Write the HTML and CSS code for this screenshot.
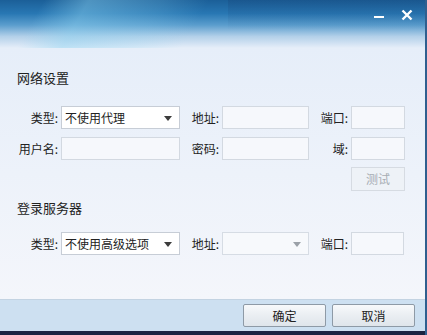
FILE: index.html
```html
<!DOCTYPE html>
<html>

<head>
  <title>网络设置</title>
  <link rel="stylesheet" href="styles.css">
</head>

<body>
  <div class="window">
    <div class="titlebar">
      <div class="streak"></div>
      <div class="shade"></div>
      <div class="controls">
        <span class="min"></span>
        <svg class="close" width="12" height="12" viewBox="0 0 12 12">
          <path d="M1.5 1.5 L10.5 10.5 M10.5 1.5 L1.5 10.5" stroke="#fff" stroke-width="2.4" />
        </svg>
      </div>
    </div>

    <div class="main">
      <div class="section-title">网络设置</div>
      <div class="grid proxy">
        <label>类型:</label>
        <div class="select">不使用代理<span class="arrow"></span></div>
        <label>地址:</label>
        <div class="field"></div>
        <label>端口:</label>
        <div class="field"></div>

        <label>用户名:</label>
        <div class="field"></div>
        <label>密码:</label>
        <div class="field"></div>
        <label>域:</label>
        <div class="field"></div>

        <div class="test">测试</div>
      </div>

      <div class="section-title second">登录服务器</div>
      <div class="grid server">
        <label>类型:</label>
        <div class="select">不使用高级选项<span class="arrow"></span></div>
        <label>地址:</label>
        <div class="select disabled"><span class="arrow"></span></div>
        <label>端口:</label>
        <div class="field short"></div>
      </div>
    </div>

    <div class="footer">
      <button class="btn">确定</button>
      <button class="btn">取消</button>
    </div>
    <div class="taskbar"></div>
  </div>
</body>

</html>
```

FILE: styles.css
```css
body {
  margin: 0;
  font-family: "Noto Sans CJK SC", "Noto Sans", sans-serif;
  font-size: 12px;
  color: #222;
  background: #1b2442;
}

.window {
  width: 427px;
  height: 335px;
  display: flex;
  flex-direction: column;
  overflow: hidden;
  position: relative;
  box-sizing: border-box;
  border-right: 2px solid #2f5f8f;
}

.titlebar {
  height: 48px;
  flex: none;
  position: relative;
  overflow: hidden;
  background: linear-gradient(180deg, #1b5f98 0%, #2877b3 28%, #5a9dcd 52%, #b3d0e9 76%, #e6eef9 100%);
}

.streak {
  position: absolute;
  left: -40px;
  top: -10px;
  width: 260px;
  height: 70px;
  background: linear-gradient(120deg, rgba(255, 255, 255, 0) 30%, rgba(140, 210, 240, 0.45) 45%, rgba(140, 210, 240, 0.2) 70%, rgba(255, 255, 255, 0) 85%);
}

/* right part of the title bar is a touch darker */
.shade {
  position: absolute;
  left: 228px;
  right: 0;
  top: 0;
  height: 30px;
  background: linear-gradient(180deg, rgba(20, 50, 100, 0.18), rgba(20, 50, 100, 0));
}

.controls {
  position: absolute;
  right: 12px;
  top: 9px;
  display: flex;
  align-items: center;
  gap: 17px;
}

.min {
  display: block;
  width: 10px;
  height: 2px;
  margin-top: 4px;
  background: #fff;
}

.main {
  flex: 1;
  padding: 22px 0 0 17px;
  background: linear-gradient(180deg, #e6eef9 0%, #edf2fa 50%, #f4f6fb 100%);
}

.section-title {
  font-size: 13px;
  line-height: 16px;
  height: 16px;
}

.section-title.second {
  margin-top: 9px;
}

.grid {
  display: grid;
  grid-template-columns: 44px 119px 42px 87px 42px 54px;
  grid-auto-rows: 23px;
  row-gap: 8px;
  align-items: center;
}

.proxy {
  margin-top: 20px;
}

.server {
  margin-top: 16px;
}

label {
  text-align: right;
  padding-right: 3px;
  line-height: 23px;
}

.field,
.select {
  height: 23px;
  box-sizing: border-box;
  border: 1px solid #d3d9e1;
  background: #f6f8fc;
}

.select {
  position: relative;
  background: #fff;
  border-color: #c7cdd6;
  padding-left: 3px;
  line-height: 21px;
}

.select.disabled {
  background: #f7f9fc;
  border-color: #d6dce4;
}

.arrow {
  position: absolute;
  right: 7px;
  top: 9px;
  border-left: 4px solid transparent;
  border-right: 4px solid transparent;
  border-top: 5px solid #3c3c3c;
}

.disabled .arrow {
  border-top-color: #9ba1a8;
}

.server .short {
  width: 53px;
}

.test {
  grid-column: 6;
  height: 24px;
  margin-top: -1px;
  box-sizing: border-box;
  border: 1px solid #d6dbe2;
  background: #eef2f7;
  color: #a7adb4;
  text-align: center;
  line-height: 22px;
}

.footer {
  height: 32px;
  flex: none;
  background: #cde0f1;
  border-top: 1px solid #c3d3e2;
  box-sizing: border-box;
  display: flex;
  justify-content: flex-end;
  align-items: flex-start;
  padding: 4px 10px 0 0;
  gap: 6px;
}

.btn {
  width: 83px;
  height: 23px;
  font-family: inherit;
  font-size: 12px;
  color: #222;
  border: 1px solid #8e9aa6;
  border-radius: 2px;
  background: linear-gradient(180deg, #f7f9fb 0%, #eaeef2 50%, #dfe5eb 100%);
  padding: 0;
}

.taskbar {
  height: 4px;
  flex: none;
  background: #1b2442;
}
```
